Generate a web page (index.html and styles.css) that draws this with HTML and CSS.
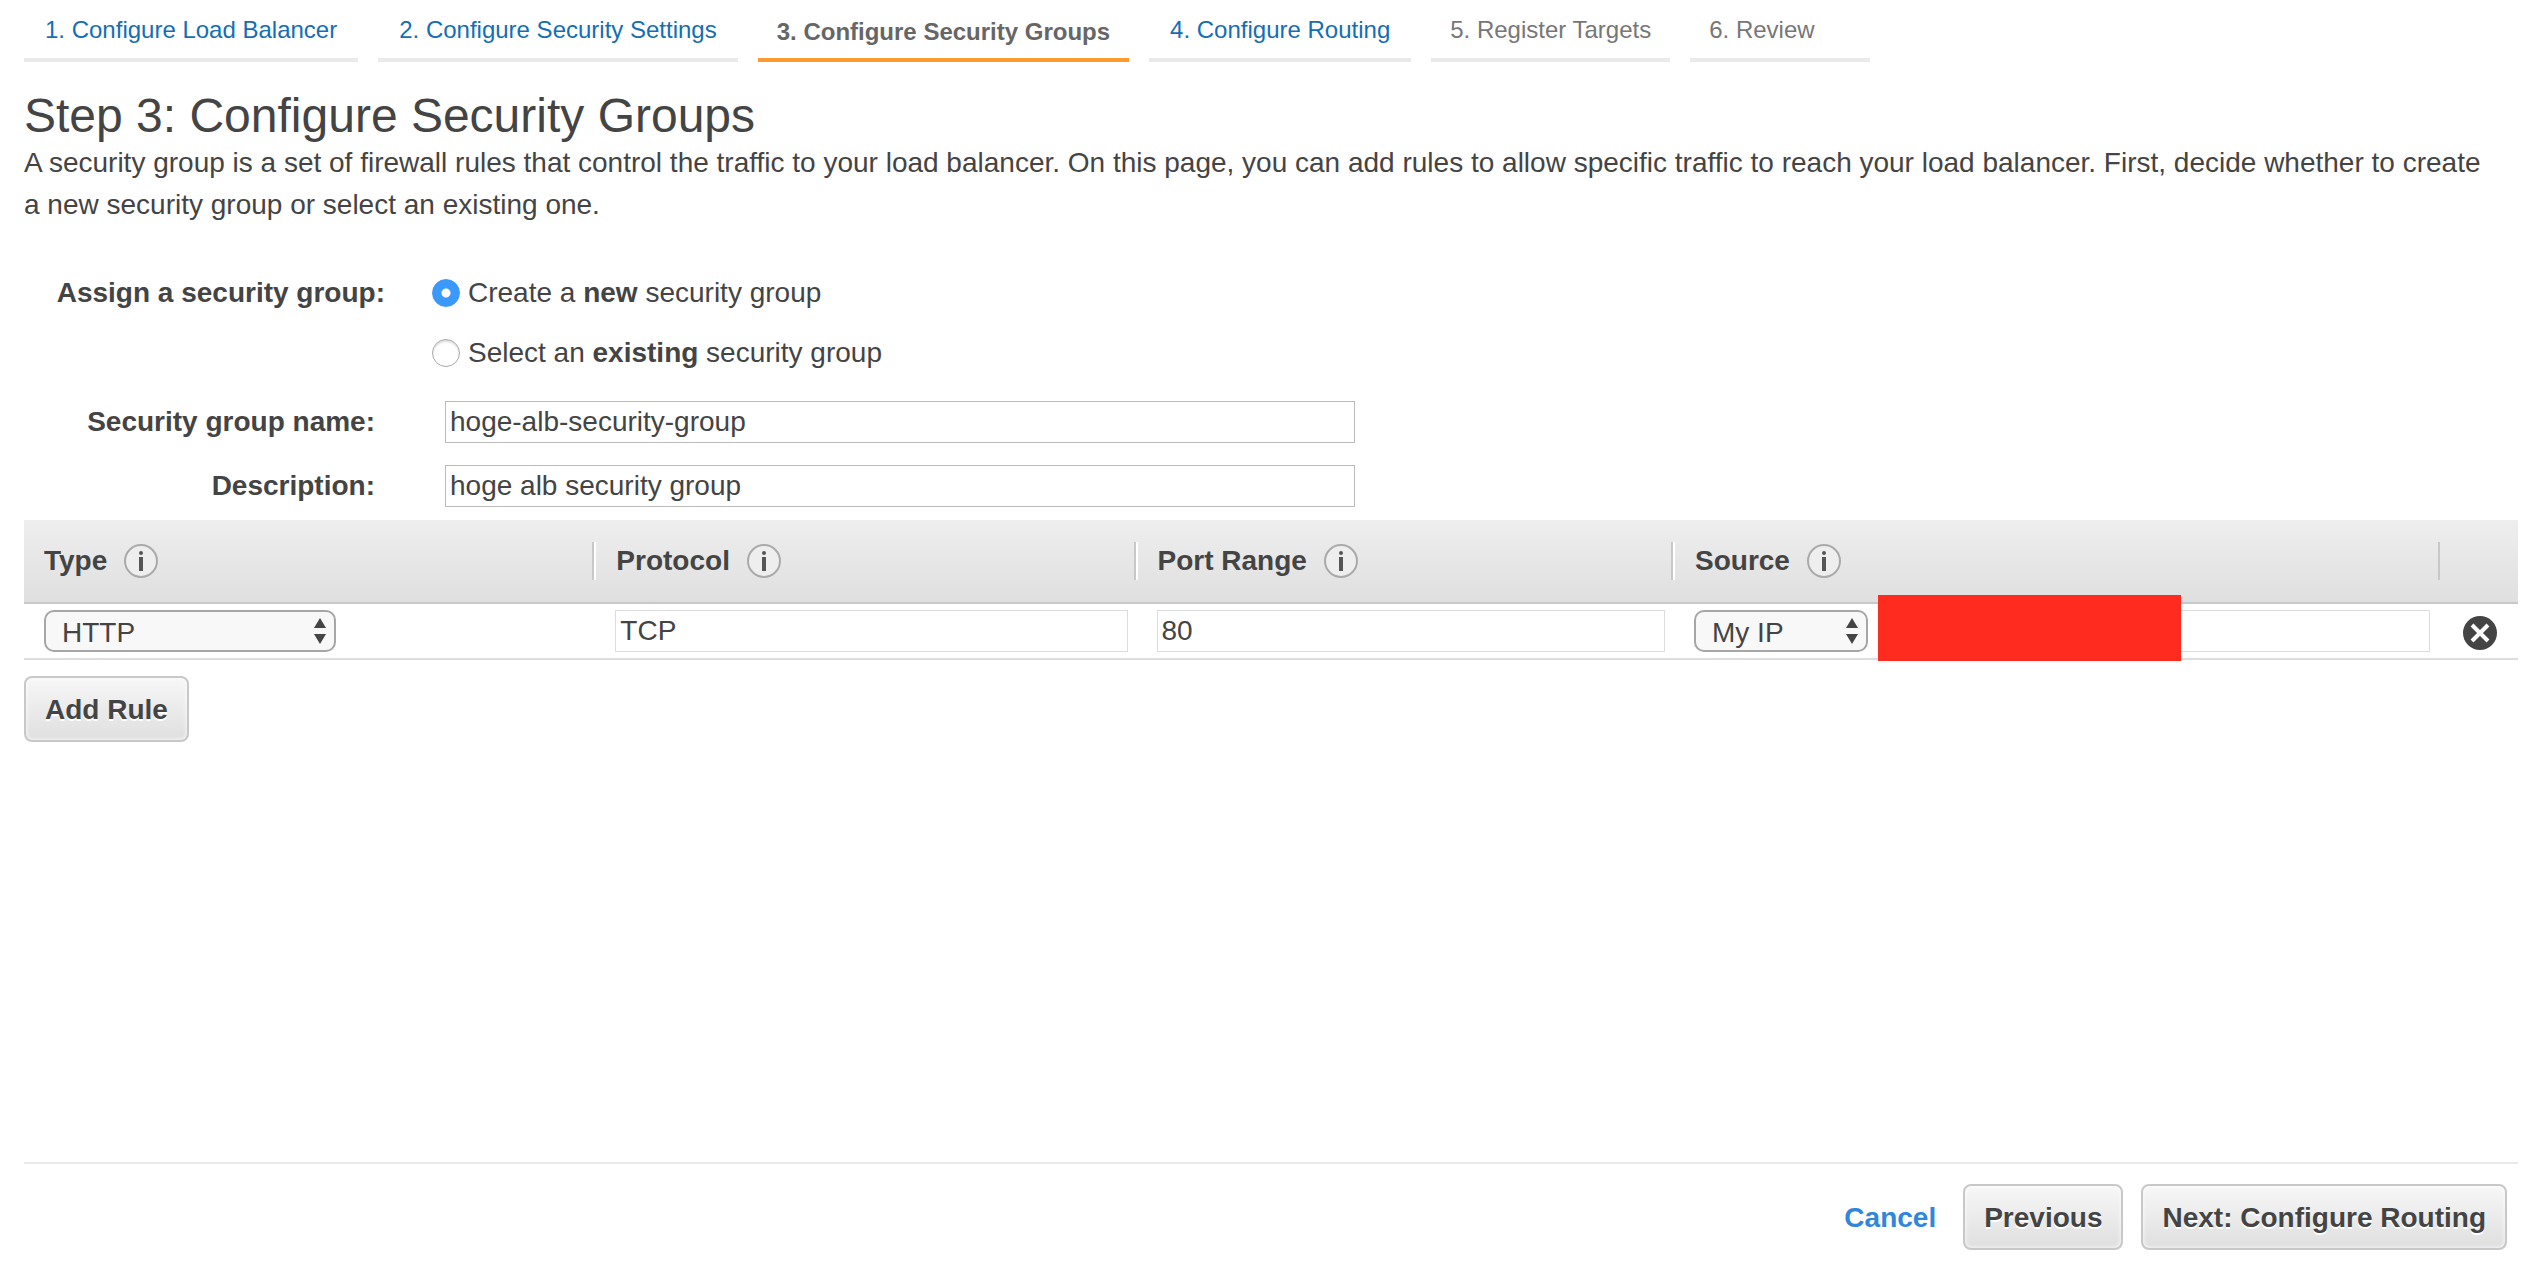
FILE: index.html
```html
<!DOCTYPE html>
<html lang="en">
<head>
<meta charset="utf-8">
<title>Configure Security Groups</title>
<link rel="stylesheet" href="styles.css">
</head>
<body>
<svg class="sprite" aria-hidden="true">
  <symbol id="info" viewBox="0 0 36 36">
    <circle cx="18" cy="18" r="16" fill="#eee" stroke="#aaa" stroke-width="2"/>
    <circle cx="18" cy="10" r="2" fill="#555"/>
    <path d="M18 14v14" stroke="#555" stroke-width="4"/>
  </symbol>
  <symbol id="arrows" viewBox="0 0 14 28">
    <path d="M7 1l6 10H1zM7 27l6-10H1z" fill="#444"/>
  </symbol>
</svg>
<div class="page">
  <nav class="steps" aria-label="Wizard steps">
    <a class="step" href="#step1">1. Configure Load Balancer</a>
    <a class="step" href="#step2">2. Configure Security Settings</a>
    <span class="step current" aria-current="step">3. Configure Security Groups</span>
    <a class="step" href="#step4">4. Configure Routing</a>
    <span class="step disabled">5. Register Targets</span>
    <span class="step disabled last">6. Review</span>
  </nav>

  <main>
    <h1>Step 3: Configure Security Groups</h1>
    <p class="intro">A security group is a set of firewall rules that control the traffic to your load balancer. On this page, you can add rules to allow specific traffic to reach your load balancer. First, decide whether to create a new security group or select an existing one.</p>

    <form>
      <div class="assign" role="radiogroup" aria-labelledby="assign-label">
        <span class="assign-label" id="assign-label">Assign a security group:</span>
        <div class="choices">
          <label class="choice"><input type="radio" name="mode" checked><span>Create a <b>new</b> security group</span></label>
          <label class="choice"><input type="radio" name="mode"><span>Select an <b>existing</b> security group</span></label>
        </div>
      </div>
      <div class="fields">
        <label for="name">Security group name:</label>
        <input class="text" id="name" type="text" value="hoge-alb-security-group">
        <label for="desc">Description:</label>
        <input class="text" id="desc" type="text" value="hoge alb security group">
      </div>

      <table class="rules">
        <thead>
          <tr>
            <th class="c-type" scope="col"><span class="head">Type <svg class="info"><use href="#info"/></svg></span></th>
            <th class="c-proto" scope="col"><span class="head">Protocol <svg class="info"><use href="#info"/></svg></span></th>
            <th class="c-port" scope="col"><span class="head">Port Range <svg class="info"><use href="#info"/></svg></span></th>
            <th class="c-source" scope="col"><span class="head">Source <svg class="info"><use href="#info"/></svg></span></th>
            <th class="c-remove"></th>
          </tr>
        </thead>
        <tbody>
          <tr>
            <td class="c-type"><span class="select type"><select aria-label="Type"><option>HTTP</option></select><svg class="arrows"><use href="#arrows"/></svg></span></td>
            <td><input class="text light" type="text" aria-label="Protocol" value="TCP"></td>
            <td><input class="text light" type="text" aria-label="Port range" value="80"></td>
            <td>
              <div class="source">
                <span class="select ip"><select aria-label="Source"><option>My IP</option></select><svg class="arrows"><use href="#arrows"/></svg></span>
                <div class="address"><input class="text light" type="text" aria-label="Source address"><span class="mask"></span></div>
              </div>
            </td>
            <td class="c-remove">
              <button class="remove" type="button" aria-label="Remove rule">
                <svg viewBox="0 0 36 36"><circle cx="18" cy="18" r="17" fill="#444"/><path d="M10 10l16 16M26 10L10 26" stroke="#fff" stroke-width="4"/></svg>
              </button>
            </td>
          </tr>
        </tbody>
      </table>
      <button class="btn" type="button">Add Rule</button>
    </form>
  </main>

  <footer class="actions">
    <a class="cancel" href="#cancel">Cancel</a>
    <button class="btn" type="button">Previous</button>
    <button class="btn" type="button">Next: Configure Routing</button>
  </footer>
</div>
</body>
</html>
```

FILE: styles.css
```css
* {
  box-sizing: border-box;
}

body {
  margin: 0;
  background: #fff;
  color: #444;
  font: 28px/42px "Liberation Sans", Arial, sans-serif;
}

input,
select,
button {
  margin: 0;
  color: inherit;
  font: inherit;
}

.sprite {
  display: none;
}

.page {
  display: flex;
  flex-direction: column;
  min-height: 100vh;
  padding: 0 4px 18px 24px;
}

/* Wizard steps */
.steps {
  display: flex;
  gap: 20px;
}

.step {
  height: 62px;
  padding: 14px 21px 0;
  border-bottom: 4px solid #eaeaea;
  color: #146eb4;
  font-size: 24px;
  line-height: 32px;
  text-decoration: none;
  white-space: nowrap;
}

.step.current {
  padding: 16px 19px 0;
  border-color: #ff9a2e;
  color: #666;
  font-weight: bold;
}

.step.disabled {
  padding: 14px 19px 0;
  color: #777;
}

.step.last {
  min-width: 180px;
}

h1 {
  margin: 28px 0 0;
  font-size: 48px;
  font-weight: normal;
  line-height: 52px;
}

.intro {
  margin: 0 0 46px;
  padding-right: 20px;
}

/* Group form */
.assign {
  display: flex;
  gap: 47px;
  margin-bottom: 27px;
}

.assign-label {
  width: 361px;
  font-weight: bold;
  text-align: right;
}

.choices {
  display: flex;
  flex-direction: column;
  gap: 18px;
}

.choice {
  display: flex;
  align-items: center;
  gap: 8px;
}

.choice input {
  width: 28px;
  height: 28px;
  appearance: none;
  border: 1px solid #aaa;
  border-radius: 50%;
  box-shadow: inset 0 2px 2px #ddd;
}

.choice input:checked {
  border-color: #3b99fc;
  background: radial-gradient(circle, #fff 4px, #3b99fc 5px);
  box-shadow: none;
}

.fields {
  display: grid;
  grid-template-columns: 351px 910px;
  gap: 22px 70px;
  margin-bottom: 13px;
}

.fields label {
  font-weight: bold;
  text-align: right;
}

.text {
  display: block;
  width: 100%;
  height: 42px;
  padding: 0 4px;
  border: 1px solid #bbb;
  background: #fff;
}

.text.light {
  border-color: #ddd;
}

/* Rules table */
.rules {
  width: 100%;
  margin-bottom: 16px;
  border-spacing: 0;
  table-layout: fixed;
}

.rules thead tr {
  background: linear-gradient(#eee, #dfdfdf);
}

.rules th {
  height: 84px;
  padding: 0 10px 0 20px;
  border-bottom: 2px solid #c8c8c8;
  background: linear-gradient(90deg, #c8c8c8 50%, #fff 50%) right 22px / 4px 38px no-repeat;
  text-align: left;
}

.rules th.c-source {
  background: linear-gradient(#c8c8c8, #c8c8c8) right 22px / 2px 38px no-repeat;
}

.rules th.c-remove {
  background: none;
}

.rules td {
  height: 56px;
  padding: 0 10px 0 19px;
  border-bottom: 2px solid #ddd;
}

.rules .c-type {
  width: 22.95%;
  padding-left: 20px;
}

.rules .c-proto {
  width: 21.7%;
}

.rules .c-port {
  width: 21.55%;
}

.rules .c-remove {
  width: 78px;
  padding: 4px 20px 0 22px;
}

.head {
  display: flex;
  align-items: center;
  gap: 16px;
}

.info {
  width: 36px;
  height: 36px;
}

.select {
  display: block;
  position: relative;
}

.select select {
  display: block;
  width: 100%;
  height: 42px;
  padding: 0 16px 2px;
  appearance: none;
  border: 2px solid #a6a6a6;
  border-radius: 10px;
  background: #f8f8f8;
}

.select.type {
  width: 292px;
}

.select.ip {
  flex: none;
  width: 174px;
}

.arrows {
  position: absolute;
  top: 7px;
  right: 9px;
  width: 14px;
  height: 28px;
  pointer-events: none;
}

.source {
  display: flex;
  gap: 10px;
}

.address {
  position: relative;
  flex: 1;
}

.mask {
  position: absolute;
  top: -15px;
  left: 0;
  width: 303px;
  height: 66px;
  background: #ff2b1f;
}

.remove {
  display: block;
  width: 36px;
  height: 36px;
  padding: 0;
  border: 0;
  background: none;
}

.remove svg {
  display: block;
}

/* Buttons */
.btn {
  height: 66px;
  padding: 2px 19px 0;
  border: 2px solid #c8c8c8;
  border-radius: 8px;
  background: linear-gradient(#f7f7f7, #dfdfdf);
  box-shadow: inset 0 0 4px #fff;
  font-weight: bold;
  text-shadow: 0 2px 0 #fff;
}

.actions {
  display: flex;
  align-items: center;
  justify-content: flex-end;
  gap: 18px;
  margin-top: auto;
  padding: 20px 11px 0 0;
  border-top: 2px solid #eaeaea;
}

.cancel {
  margin-right: 9px;
  padding-top: 2px;
  color: #2f86dd;
  font-weight: bold;
  text-decoration: none;
}
```
